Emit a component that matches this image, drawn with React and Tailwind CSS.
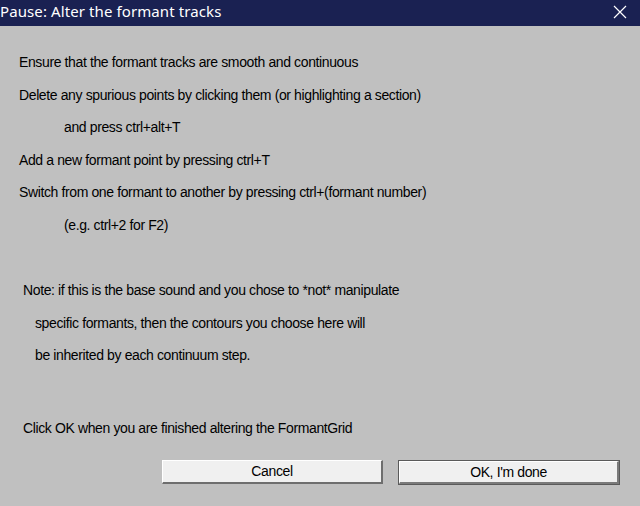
export default function App() {
  const body = "font-['Liberation_Sans',Arial,sans-serif] text-[14px] tracking-[-0.38px] text-black";
  return (
    <div className="w-[640px] h-[506px] bg-[#c0c0c0] flex flex-col overflow-hidden">
      {/* title bar */}
      <div className="h-[26px] bg-[#1a2152] flex items-center justify-between pr-[13px]">
        <span className="font-['Noto_Sans','Open_Sans',sans-serif] text-[15px] tracking-[0.1px] text-white leading-none -mt-[3px]">
          Pause: Alter the formant tracks
        </span>
        <svg width="14" height="14" viewBox="0 0 14 14" className="-mt-[2px]">
          <path d="M1 1 L13 13 M13 1 L1 13" stroke="#fff" strokeWidth="1.2" />
        </svg>
      </div>

      <div className={`${body} flex flex-col leading-[32.5px] pt-[20px]`}>
        <p className="pl-[19px]">Ensure that the formant tracks are smooth and continuous</p>
        <p className="pl-[19px]">Delete any spurious points by clicking them (or highlighting a section)</p>
        <p className="pl-[64px]">and press ctrl+alt+T</p>
        <p className="pl-[19px]">Add a new formant point by pressing ctrl+T</p>
        <p className="pl-[19px]">Switch from one formant to another by pressing ctrl+(formant number)</p>
        <p className="pl-[64px]">(e.g. ctrl+2 for F2)</p>
        <p className="pl-[23px] mt-[33px]">Note: if this is the base sound and you chose to *not* manipulate</p>
        <p className="pl-[35px]">specific formants, then the contours you choose here will</p>
        <p className="pl-[35px]">be inherited by each continuum step.</p>
        <p className="pl-[23px] mt-[40px]">Click OK when you are finished altering the FormantGrid</p>
      </div>

      <div className={`${body} flex gap-[15px] pl-[162px] mt-[16px]`}>
        <button className="w-[221px] h-[24px] bg-[#f0f0f0] border-t border-l border-t-white border-l-white border-b-2 border-r-2 border-b-[#6e6e6e] border-r-[#6e6e6e] flex items-center justify-center">
          Cancel
        </button>
        <button className="w-[222px] h-[25px] border border-[#5a5a5a] flex">
          <span className="flex-1 bg-[#f0f0f0] border-t border-l border-t-white border-l-white border-b-2 border-r-2 border-b-[#7a7a7a] border-r-[#7a7a7a] flex items-center justify-center">
            OK, I'm done
          </span>
        </button>
      </div>
    </div>
  );
}
